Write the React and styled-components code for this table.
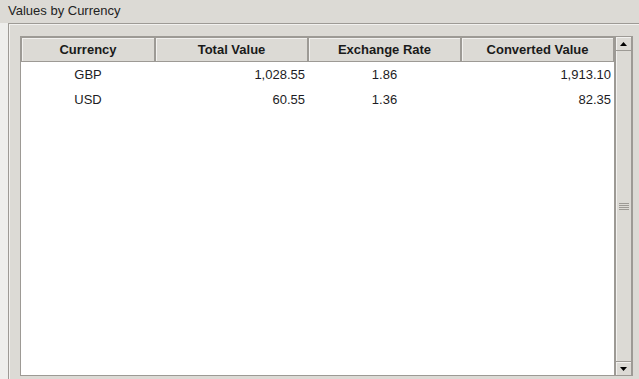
import React from "react";
import styled, { createGlobalStyle } from "styled-components";

const GlobalStyle = createGlobalStyle`
  html, body { margin: 0; padding: 0; background: #dcdad5; }
  body { font-family: "Liberation Sans", Arial, sans-serif; }
`;

const Window = styled.div`
  width: 639px;
  height: 379px;
  overflow: hidden;
  background: #dcdad5;
  display: flex;
  flex-direction: column;
  font-family: "Liberation Sans", Arial, sans-serif;
  font-size: 13px;
  color: #1c1c1c;
`;

const TitleBar = styled.div`
  height: 23px;
  flex: none;
  padding-left: 8px;
  line-height: 22px;
  color: #222;
  white-space: nowrap;
`;

const Body = styled.div`
  flex: 1;
  display: flex;
  min-height: 0;
`;

const Gutter = styled.div`
  width: 8px;
  flex: none;
  background: #eeeeec;
`;

/* etched group box: dark line with a light line just inside */
const GroupBox = styled.div`
  flex: 1;
  display: flex;
  border-top: 1px solid #9d9a95;
  border-left: 1px solid #9d9a95;
  box-shadow: inset 1px 1px 0 #f2f1ef;
  background: #dcdad5;
  padding: 12px 6px 3px 11px;
`;

const ScrollPane = styled.div`
  flex: 1;
  display: flex;
  border: 1px solid #9d9a95;
  background: #d6d3ce;
`;

const Viewport = styled.div`
  flex: 1;
  display: flex;
  flex-direction: column;
  background: #ffffff;
`;

const Grid = styled.div`
  display: grid;
  grid-template-columns: 134px 153px 153px 153px;
`;

const HeaderRow = styled(Grid)`
  height: 25px;
  background: #dcdad5;
`;

const HeaderCell = styled.div`
  border: 1px solid #9d9a95;
  box-shadow: inset 1px 1px 0 #f2f1ef;
  display: flex;
  align-items: center;
  justify-content: center;
  font-weight: bold;
  color: #1a1a1a;
  white-space: nowrap;
`;

const Row = styled(Grid)`
  height: 25px;
`;

const Cell = styled.div`
  display: flex;
  align-items: center;
  justify-content: ${(p) =>
    p.$align === "right" ? "flex-end" : "center"};
  padding: 0 3px;
  white-space: nowrap;
  color: #1c1c24;
`;

const ScrollBar = styled.div`
  width: 16px;
  flex: none;
  display: flex;
  flex-direction: column;
  border-left: 2px solid #9d9a95;
  background: #d6d3ce;
`;

const ArrowButton = styled.div`
  height: 13px;
  flex: none;
  background: #dcdad5;
  border-right: 1px solid #9d9a95;
  border-${(p) => (p.$down ? "top" : "bottom")}: 1px solid #9d9a95;
  box-shadow: inset 1px 1px 0 #f2f1ef;
  display: flex;
  align-items: center;
  justify-content: center;
`;

const Thumb = styled.div`
  flex: 1;
  background: #dcdad5;
  border-right: 1px solid #9d9a95;
  box-shadow: inset 1px 0 0 #f2f1ef;
  display: flex;
  align-items: center;
  justify-content: center;
`;

const Grip = styled.div`
  width: 10px;
  height: 7px;
  background: repeating-linear-gradient(
    to bottom,
    #9d9a95 0,
    #9d9a95 1px,
    transparent 1px,
    transparent 2px
  );
`;

const Arrow = ({ down }) => (
  <svg width="7" height="4" viewBox="0 0 7 4">
    <polygon
      points={down ? "0,0 7,0 3.5,4" : "0,4 7,4 3.5,0"}
      fill="#000"
    />
  </svg>
);

const columns = ["Currency", "Total Value", "Exchange Rate", "Converted Value"];

const rows = [
  { currency: "GBP", total: "1,028.55", rate: "1.86", converted: "1,913.10" },
  { currency: "USD", total: "60.55", rate: "1.36", converted: "82.35" },
];

export default function App() {
  return (
    <>
      <GlobalStyle />
      <Window>
        <TitleBar>Values by Currency</TitleBar>
        <Body>
          <Gutter />
          <GroupBox>
            <ScrollPane>
              <Viewport>
                <HeaderRow>
                  {columns.map((c) => (
                    <HeaderCell key={c}>{c}</HeaderCell>
                  ))}
                </HeaderRow>
                {rows.map((r) => (
                  <Row key={r.currency}>
                    <Cell>{r.currency}</Cell>
                    <Cell $align="right">{r.total}</Cell>
                    <Cell>{r.rate}</Cell>
                    <Cell $align="right">{r.converted}</Cell>
                  </Row>
                ))}
              </Viewport>
              <ScrollBar>
                <ArrowButton>
                  <Arrow />
                </ArrowButton>
                <Thumb>
                  <Grip />
                </Thumb>
                <ArrowButton $down>
                  <Arrow down />
                </ArrowButton>
              </ScrollBar>
            </ScrollPane>
          </GroupBox>
        </Body>
      </Window>
    </>
  );
}
